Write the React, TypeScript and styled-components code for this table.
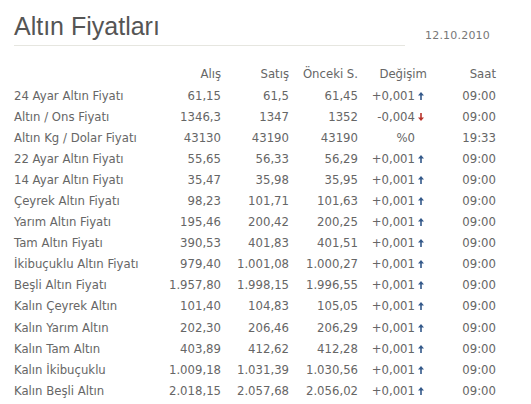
import React from 'react';
import styled, { createGlobalStyle } from 'styled-components';

const GlobalStyle = createGlobalStyle`
  html, body {
    margin: 0;
    padding: 0;
    background: #fff;
  }
`;

const Page = styled.div`
  width: 531px;
  height: 404px;
  box-sizing: border-box;
  padding: 12px 0 0 14px;
  font-family: 'DejaVu Sans', Verdana, sans-serif;
  color: #666;
  overflow: hidden;
`;

const TitleBar = styled.div`
  display: flex;
  align-items: flex-end;
`;

const Title = styled.h1`
  margin: 0;
  width: 391px;
  padding-bottom: 4px;
  border-bottom: 1px solid #e6e6e0;
  font-family: 'Liberation Sans', Arial, sans-serif;
  font-weight: normal;
  font-size: 25px;
  line-height: 29px;
  color: #555;
`;

const DateText = styled.span`
  margin-left: 20px;
  margin-bottom: 4px;
  font-size: 11px;
  color: #777;
  letter-spacing: 0.2px;
`;

const Table = styled.div`
  margin-top: 17px;
  display: grid;
  grid-template-columns: 150px 57px 68px 69px 69px 69px;
  grid-template-rows: 22px;
  grid-auto-rows: 21.1px;
  align-items: center;
  font-size: 11.7px;
`;

const Cell = styled.div<{ $left?: boolean }>`
  text-align: ${(p) => (p.$left ? 'left' : 'right')};
  white-space: nowrap;
`;

const Change = styled.div`
  display: flex;
  align-items: center;
  justify-content: flex-end;
  white-space: nowrap;
`;

const ArrowBox = styled.span`
  display: inline-flex;
  justify-content: center;
  width: 12px;
`;

const Arrow = ({ dir }: { dir: 'up' | 'down' | null }) => {
  if (!dir) return <ArrowBox />;
  const color = dir === 'down' ? '#b8332b' : '#34598a';
  return (
    <ArrowBox>
      <svg width="6" height="8" viewBox="0 0 6 8" style={{ transform: dir === 'down' ? 'rotate(180deg)' : undefined }}>
        <path d="M3 0 L6 3.5 L3.8 3.5 L3.8 8 L2.2 8 L2.2 3.5 L0 3.5 Z" fill={color} />
      </svg>
    </ArrowBox>
  );
};

type Row = [string, string, string, string, string, 'up' | 'down' | null, string];

const rows: Row[] = [
  ['24 Ayar Altın Fiyatı', '61,15', '61,5', '61,45', '+0,001', 'up', '09:00'],
  ['Altın / Ons Fiyatı', '1346,3', '1347', '1352', '-0,004', 'down', '09:00'],
  ['Altın Kg / Dolar Fiyatı', '43130', '43190', '43190', '%0', null, '19:33'],
  ['22 Ayar Altın Fiyatı', '55,65', '56,33', '56,29', '+0,001', 'up', '09:00'],
  ['14 Ayar Altın Fiyatı', '35,47', '35,98', '35,95', '+0,001', 'up', '09:00'],
  ['Çeyrek Altın Fiyatı', '98,23', '101,71', '101,63', '+0,001', 'up', '09:00'],
  ['Yarım Altın Fiyatı', '195,46', '200,42', '200,25', '+0,001', 'up', '09:00'],
  ['Tam Altın Fiyatı', '390,53', '401,83', '401,51', '+0,001', 'up', '09:00'],
  ['İkibuçuklu Altın Fiyatı', '979,40', '1.001,08', '1.000,27', '+0,001', 'up', '09:00'],
  ['Beşli Altın Fiyatı', '1.957,80', '1.998,15', '1.996,55', '+0,001', 'up', '09:00'],
  ['Kalın Çeyrek Altın', '101,40', '104,83', '105,05', '+0,001', 'up', '09:00'],
  ['Kalın Yarım Altın', '202,30', '206,46', '206,29', '+0,001', 'up', '09:00'],
  ['Kalın Tam Altın', '403,89', '412,62', '412,28', '+0,001', 'up', '09:00'],
  ['Kalın İkibuçuklu', '1.009,18', '1.031,39', '1.030,56', '+0,001', 'up', '09:00'],
  ['Kalın Beşli Altın', '2.018,15', '2.057,68', '2.056,02', '+0,001', 'up', '09:00'],
];

const App = () => {
  return (
    <Page>
      <GlobalStyle />
      <TitleBar>
        <Title>Altın Fiyatları</Title>
        <DateText>12.10.2010</DateText>
      </TitleBar>
      <Table>
        <Cell $left></Cell>
        <Cell>Alış</Cell>
        <Cell>Satış</Cell>
        <Cell>Önceki S.</Cell>
        <Cell>Değişim</Cell>
        <Cell>Saat</Cell>
        {rows.map((r, i) => (
          <React.Fragment key={i}>
            <Cell $left>{r[0]}</Cell>
            <Cell>{r[1]}</Cell>
            <Cell>{r[2]}</Cell>
            <Cell>{r[3]}</Cell>
            <Change>
              <span>{r[4]}</span>
              <Arrow dir={r[5]} />
            </Change>
            <Cell>{r[6]}</Cell>
          </React.Fragment>
        ))}
      </Table>
    </Page>
  );
};

export default App;
